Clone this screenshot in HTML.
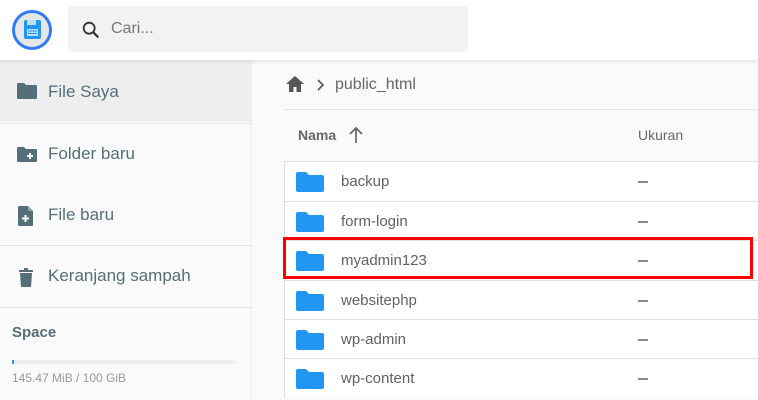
<!DOCTYPE html>
<html><head><meta charset="utf-8"><style>
*{margin:0;padding:0;box-sizing:border-box}
body{width:758px;height:400px;overflow:hidden;background:#fafafa;font-family:"Liberation Sans",Roboto,sans-serif;position:relative}
.hdr{position:absolute;left:0;top:0;width:758px;height:60px;background:#fff;box-shadow:0 1px 4px rgba(0,0,0,.12);z-index:2}
.logo{position:absolute;left:12px;top:10px;width:40px;height:40px;border-radius:50%;border:3px solid #2f7cf6;background:#e6e6e6}
.search{position:absolute;left:68px;top:6px;width:400px;height:46px;background:#f2f2f2;border-radius:4px}
.search span{position:absolute;left:43px;top:14px;font-size:16px;color:#777}
.side{position:absolute;left:0;top:60px;width:252px;height:340px;background:#fafafa;border-right:1px solid #eee}
.item{position:absolute;left:0;width:252px;height:62px;font-size:17px;color:#546e7a}
.item span{position:absolute;left:48px;top:22px}
.item svg{position:absolute;left:16px;top:21px}
.sep{position:absolute;left:0;width:252px;height:1px;background:#e4e4e4}
.row{position:absolute;left:284px;width:474px;height:40px;background:#fff;border-top:1px solid #e0e0e0;border-left:1px solid #e0e0e0}
.row svg{position:absolute;left:11px;top:9px}
.row .n{position:absolute;left:56px;top:11px;font-size:15px;color:#616161}
.row .d{position:absolute;left:353px;top:19px;width:10px;height:1.5px;background:#888}
</style></head><body>
<div class="hdr">
<div class="logo"><svg width="34" height="34" viewBox="0 0 34 34" style="position:absolute;left:0;top:0"><rect x="9" y="7" width="17" height="19" rx="2" fill="#2196f3"/><rect x="12" y="7" width="9" height="5" fill="#bbdefb"/><rect x="12" y="16" width="11" height="7" fill="#bbdefb"/><line x1="13" y1="18" x2="22" y2="18" stroke="#2196f3"/><line x1="13" y1="20.5" x2="22" y2="20.5" stroke="#2196f3"/></svg></div>
<div class="search"><svg width="22" height="22" viewBox="0 0 24 24" style="position:absolute;left:12px;top:13px"><circle cx="10" cy="10" r="6" fill="none" stroke="#333" stroke-width="2"/><line x1="14.5" y1="14.5" x2="20" y2="20" stroke="#333" stroke-width="2.4"/></svg><span>Cari...</span></div>
</div>
<div class="side">
<div class="item" style="top:0;background:#eeeeee;width:251px"><svg width="22" height="20" viewBox="0 0 22 20"><path d="M1 3a1 1 0 0 1 1-1h6l2 2h10a1 1 0 0 1 1 1v12a1 1 0 0 1-1 1H2a1 1 0 0 1-1-1z" fill="#546e7a"/></svg><span>File Saya</span></div>
<div class="sep" style="top:63px"></div>
<div class="item" style="top:64px"><svg width="22" height="20" viewBox="0 0 22 20"><path d="M1 3a1 1 0 0 1 1-1h6l2 2h10a1 1 0 0 1 1 1v11a1 1 0 0 1-1 1H2a1 1 0 0 1-1-1z" fill="#546e7a"/><path d="M14 8v6M11 11h6" stroke="#fff" stroke-width="2"/></svg><span style="top:20px">Folder baru</span></div>
<div class="item" style="top:124px"><svg width="22" height="22" viewBox="0 0 22 22"><path d="M3 1h9l5 5v14a1 1 0 0 1-1 1H3a1 1 0 0 1-1-1V2a1 1 0 0 1 1-1z" fill="#546e7a"/><path d="M12 1v5h5" fill="#8fa3ad"/><path d="M9.5 10v7M6 13.5h7" stroke="#fff" stroke-width="2"/></svg><span style="top:21px">File baru</span></div>
<div class="sep" style="top:185px"></div>
<div class="item" style="top:186px"><svg width="22" height="22" viewBox="0 0 22 22"><rect x="3" y="3" width="14" height="2" fill="#546e7a"/><rect x="8" y="1" width="4" height="2" fill="#546e7a"/><path d="M4 6h12l-1 14H5z" fill="#546e7a"/></svg><span style="top:20px">Keranjang sampah</span></div>
<div class="sep" style="top:247px"></div>
<div style="position:absolute;left:12px;top:264px;font-size:15px;font-weight:bold;color:#546e7a">Space</div>
<div style="position:absolute;left:12px;top:300px;width:224px;height:4px;background:#eee"><div style="width:2px;height:4px;background:#2196f3"></div></div>
<div style="position:absolute;left:12px;top:311px;font-size:12px;color:#999">145.47 MiB / 100 GiB</div>
</div>
<svg width="20" height="18" viewBox="0 0 20 18" style="position:absolute;left:285px;top:75px"><path d="M10 1L1 9h3v8h4.5v-5h3v5H16V9h3z" fill="#555"/></svg>
<svg width="10" height="12" viewBox="0 0 10 12" style="position:absolute;left:316px;top:79px"><path d="M2 1l5 5-5 5" fill="none" stroke="#555" stroke-width="1.6"/></svg>
<div style="position:absolute;left:335px;top:76px;font-size:16px;color:#666">public_html</div>
<div style="position:absolute;left:284px;top:109px;width:474px;height:1px;background:#e4e4e4"></div>
<div style="position:absolute;left:298px;top:127px;font-size:14px;font-weight:bold;color:#666">Nama</div>
<svg width="16" height="18" viewBox="0 0 16 18" style="position:absolute;left:348px;top:126px"><path d="M8 17V2M2 8l6-6 6 6" fill="none" stroke="#666" stroke-width="1.7"/></svg>
<div style="position:absolute;left:638px;top:127px;font-size:14px;color:#666">Ukuran</div>
<div class="row" style="top:161px"><svg width="28" height="22" viewBox="0 0 28 22"><path d="M0 3a2 2 0 0 1 2-2h8l3 3h13a2 2 0 0 1 2 2v13a2 2 0 0 1-2 2H2a2 2 0 0 1-2-2z" fill="#2196f3"/></svg><span class="n">backup</span><i class="d"></i></div>
<div class="row" style="top:201px"><svg width="28" height="22" viewBox="0 0 28 22"><path d="M0 3a2 2 0 0 1 2-2h8l3 3h13a2 2 0 0 1 2 2v13a2 2 0 0 1-2 2H2a2 2 0 0 1-2-2z" fill="#2196f3"/></svg><span class="n">form-login</span><i class="d"></i></div>
<div class="row" style="top:240px"><svg width="28" height="22" viewBox="0 0 28 22"><path d="M0 3a2 2 0 0 1 2-2h8l3 3h13a2 2 0 0 1 2 2v13a2 2 0 0 1-2 2H2a2 2 0 0 1-2-2z" fill="#2196f3"/></svg><span class="n">myadmin123</span><i class="d"></i></div>
<div class="row" style="top:280px"><svg width="28" height="22" viewBox="0 0 28 22"><path d="M0 3a2 2 0 0 1 2-2h8l3 3h13a2 2 0 0 1 2 2v13a2 2 0 0 1-2 2H2a2 2 0 0 1-2-2z" fill="#2196f3"/></svg><span class="n">websitephp</span><i class="d"></i></div>
<div class="row" style="top:319px"><svg width="28" height="22" viewBox="0 0 28 22"><path d="M0 3a2 2 0 0 1 2-2h8l3 3h13a2 2 0 0 1 2 2v13a2 2 0 0 1-2 2H2a2 2 0 0 1-2-2z" fill="#2196f3"/></svg><span class="n">wp-admin</span><i class="d"></i></div>
<div class="row" style="top:358px"><svg width="28" height="22" viewBox="0 0 28 22"><path d="M0 3a2 2 0 0 1 2-2h8l3 3h13a2 2 0 0 1 2 2v13a2 2 0 0 1-2 2H2a2 2 0 0 1-2-2z" fill="#2196f3"/></svg><span class="n">wp-content</span><i class="d"></i></div>
<div style="position:absolute;left:283px;top:237px;width:470px;height:42px;border:3px solid #f00"></div>
</body></html>
